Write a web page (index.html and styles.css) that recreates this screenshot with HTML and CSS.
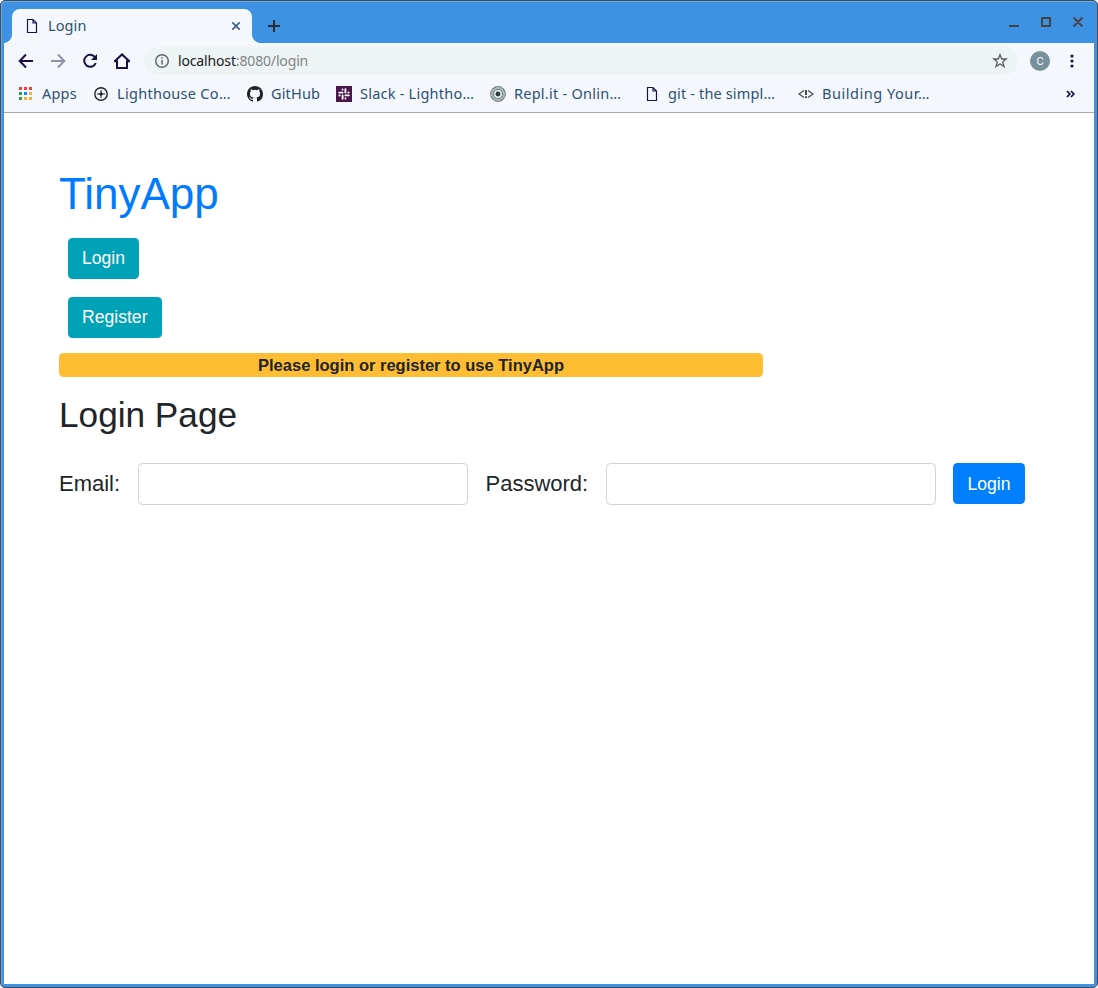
FILE: index.html
```html
<!DOCTYPE html>
<html lang="en">
<head>
<meta charset="utf-8">
<title>Login</title>
<link rel="stylesheet" href="styles.css">
</head>
<body>
<div class="window">
  <header class="titlebar">
    <div class="tab">
      <svg class="tab-file" width="12" height="16" viewBox="0 0 12 16"><path class="file" d="M1.5 1.5H7L10.5 5V14.5H1.5ZM7 1.5V5H10.5"/></svg>
      <span class="tab-title">Login</span>
      <svg class="tab-close" width="10" height="10" viewBox="0 0 10 10"><path d="M1.3 1.3L8.7 8.7M8.7 1.3L1.3 8.7"/></svg>
    </div>
    <svg class="new-tab" width="14" height="14" viewBox="0 0 14 14"><path d="M7 1V13M1 7H13"/></svg>
    <svg class="controls" width="76" height="14" viewBox="0 0 76 14"><path d="M1 11H11M34 3H42V11H34ZM65.5 2.5L74.5 11.5M74.5 2.5L65.5 11.5"/></svg>
  </header>
  <nav class="toolbar">
    <svg class="nav-icon" width="16" height="16" viewBox="0 0 16 16"><path d="M15 8H2M8 1.5L1.7 8L8 14.5"/></svg>
    <svg class="nav-icon faded" width="16" height="16" viewBox="0 0 16 16"><path d="M1 8H14M8 1.5L14.3 8L8 14.5"/></svg>
    <svg class="nav-icon" width="16" height="16" viewBox="0 0 16 16"><path d="M13.2 4.5A6 6 0 1 0 13.8 10"/><path class="solid" d="M15 1V7H9Z"/></svg>
    <svg class="nav-icon" width="16" height="16" viewBox="0 0 16 16"><path d="M.7 8.3H3V15H13V8.3H15.3L8 1.4Z"/></svg>
    <div class="address">
      <svg width="16" height="16" viewBox="0 0 16 16"><circle class="info" cx="8" cy="8" r="6.3"/><path class="info" d="M8 7V11.5M8 4.3V5.8"/></svg>
      <span class="url"><b>localhost</b>:8080/login</span>
      <svg class="star" width="16" height="16" viewBox="0 0 16 16"><path d="M8 1.8L9.7 6H14.2L10.7 8.9L12 13.6L8 11L4 13.6L5.3 8.9L1.8 6H6.3Z"/></svg>
    </div>
    <span class="avatar">C</span>
    <svg class="menu" width="4" height="14" viewBox="0 0 4 14"><circle cx="2" cy="2" r="1.6"/><circle cx="2" cy="7" r="1.6"/><circle cx="2" cy="12" r="1.6"/></svg>
  </nav>
  <nav class="bookmarks">
    <span class="mark apps"><svg width="16" height="16" viewBox="0 0 16 16"><path fill="#fb3b3f" d="M1 1h3v3H1zM6 1h3v3H6zM11 1h3v3h-3z"/><path fill="#2ca05a" d="M1 6h3v3H1zM1 11h3v3H1z"/><path fill="#1a83ee" d="M6 6h3v3H6z"/><path fill="#fbae35" d="M11 6h3v3h-3zM6 11h3v3H6zM11 11h3v3h-3z"/></svg><span>Apps</span></span>
    <span class="mark lighthouse"><svg width="16" height="16" viewBox="0 0 16 16"><g fill="none" stroke="#202326"><circle cx="8" cy="8" r="6.2" stroke-width="1.4"/><path d="M8 4V12M4 8H12"/></g><path fill="#202326" d="M8 5.8L9 7L10.2 8L9 9L8 10.2L7 9L5.8 8L7 7Z"/></svg><span>Lighthouse Co…</span></span>
    <span class="mark github"><svg width="16" height="16" viewBox="0 0 16 16"><path fill="#202326" d="M8 0C3.58 0 0 3.58 0 8c0 3.54 2.29 6.53 5.47 7.59.4.07.55-.17.55-.38 0-.19-.01-.82-.01-1.49-2.01.37-2.53-.49-2.69-.94-.09-.23-.48-.94-.82-1.13-.28-.15-.68-.52-.01-.53.63-.01 1.08.58 1.23.82.72 1.21 1.87.87 2.33.66.07-.52.28-.87.51-1.07-1.78-.2-3.64-.89-3.64-3.95 0-.87.31-1.59.82-2.15-.08-.2-.36-1.02.08-2.12 0 0 .67-.21 2.2.82a7.65 7.65 0 0 1 4 0c1.53-1.04 2.2-.82 2.2-.82.44 1.1.16 1.92.08 2.12.51.56.82 1.27.82 2.15 0 3.07-1.87 3.75-3.65 3.95.29.25.54.73.54 1.48 0 1.07-.01 1.93-.01 2.2 0 .21.15.46.55.38A8.01 8.01 0 0 0 16 8c0-4.42-3.58-8-8-8Z"/></svg><span>GitHub</span></span>
    <span class="mark slack"><svg width="16" height="16" viewBox="0 0 16 16"><path fill="#4a154b" d="M0 0h16v16H0z"/><path fill="none" stroke="#fff" stroke-width="1.9" stroke-linecap="round" d="M3.2 6.6H6.6M9.4 3.2V6.6M12.8 9.4H9.4M6.6 12.8V9.4M6.5 3.4V3.5M12.6 6.5H12.5M9.5 12.6V12.5M3.4 9.5H3.5"/><path fill="none" stroke="#fff" stroke-width="1" d="M6.6 3.5V4.3M12.4 6.6H11.7M9.4 12.4V11.7M3.5 9.4H4.3"/></svg><span>Slack - Lightho…</span></span>
    <span class="mark replit"><svg width="16" height="16" viewBox="0 0 16 16"><circle cx="8" cy="8" r="7.9" fill="#64747a"/><path fill="none" stroke="#c5d0d5" stroke-width=".9" d="M1 5.5Q5 .5 10.7 3.4M5.5 1Q11.7 1 12.5 6.3M10.5 1Q15.2 5 12.6 10.4M15 5.5Q15 11.5 9.7 12.6M15 10.5Q11 15.2 5.5 12.6M10.5 15Q4.3 15 3.4 9.7M5.5 15Q.8 11 3.4 5.5M1 10.5Q1 4.5 6.3 3.4"/><circle cx="8" cy="8" r="3.2" fill="#303b41" stroke="#e8edef" stroke-width="1.5"/></svg><span>Repl.it - Onlin…</span></span>
    <span class="mark git"><svg width="16" height="16" viewBox="0 0 16 16"><path class="file" d="M3.5 1.5H9L12.5 5V14.5H3.5ZM9 1.5V5H12.5"/></svg><span>git - the simpl…</span></span>
    <span class="mark building"><svg width="16" height="16" viewBox="0 0 16 16"><path fill="none" stroke="#45484a" stroke-width="1.2" d="M6 4.5L1 8L6 11.5M10 4.5L15 8L10 11.5"/><path stroke="#292b2d" stroke-width="1.7" d="M8 4V9M8 10.2V12"/></svg><span>Building Your…</span></span>
    <svg class="overflow" width="9" height="8" viewBox="0 0 9 8"><path d="M1 1L3.8 4L1 7M5 1L7.8 4L5 7"/></svg>
  </nav>
  <main class="page">
    <h1>TinyApp</h1>
    <div class="actions">
      <button class="btn teal">Login</button>
      <button class="btn teal">Register</button>
    </div>
    <div class="notice"><span>Please login or register to use TinyApp</span></div>
    <h2>Login Page</h2>
    <form class="login-form">
      <label class="email-label" for="email">Email:</label>
      <input id="email" type="email">
      <label class="password-label" for="password">Password:</label>
      <input id="password" type="password">
      <button class="btn primary" type="button">Login</button>
    </form>
  </main>
</div>
</body>
</html>
```
FILE: styles.css
```css
* { box-sizing: border-box; }
body { margin: 0; background: #fff; font-family: "Liberation Sans", Arial, sans-serif; color: #212529; }
svg { display: block; flex: none; }
.window { width: 1098px; height: 988px; display: flex; flex-direction: column; overflow: hidden; background: #3e92e3; border: 1px solid #484c51; border-radius: 5px; padding: 0 3px 3px; box-shadow: inset 1px 1px #63aaf0; }
.titlebar { height: 42px; flex: none; display: flex; padding: 8px 8px 0; }
.tab { position: relative; width: 240px; height: 34px; display: flex; align-items: center; background: #f4f8fd; border-radius: 8px 8px 0 0; padding: 0 11px 0 14px; }
.tab::before, .tab::after { content: ""; position: absolute; bottom: 0; width: 8px; height: 8px; }
.tab::before { left: -8px; background: radial-gradient(circle at 0 0, transparent 7.5px, #f4f8fd 8px); }
.tab::after { right: -8px; background: radial-gradient(circle at 100% 0, transparent 7.5px, #f4f8fd 8px); }
.file { fill: none; stroke: #1b1145; stroke-width: 1.2; }
.tab-title { font: 14.5px/20px "Noto Sans", sans-serif; letter-spacing: .1px; color: #2c5075; margin-left: 10px; padding-bottom: 2px; }
.tab-close { margin-left: auto; }
.tab-close path { stroke: #3d5f83; stroke-width: 1.7; }
.new-tab { margin: 10px 0 0 15px; }
.new-tab path { stroke: #292d31; stroke-width: 2; }
.controls { margin: 6px 2px 0 auto; }
.controls path { fill: none; stroke: #454545; stroke-width: 2; }
.toolbar { height: 36px; flex: none; display: flex; align-items: center; gap: 16px; background: #f4f8fd; padding: 0 20px 0 14px; }
.nav-icon path { fill: none; stroke: #1b1145; stroke-width: 2; }
.nav-icon .solid { fill: #1b1145; stroke: none; }
.faded { opacity: .45; }
.address { display: flex; align-items: center; width: 874px; height: 28px; margin-left: -2px; background: #eef3f4; border-radius: 14px; padding: 0 10px; }
.info { fill: none; stroke: #626669; stroke-width: 1.5; }
.url { margin-left: 8px; font: 14px/20px "Noto Sans", sans-serif; letter-spacing: -.15px; color: #80868b; }
.url b { font-weight: 400; color: #202124; }
.star { margin-left: auto; }
.star path { fill: none; stroke: #5b5f63; stroke-width: 1.3; }
.avatar { width: 20px; height: 20px; margin-left: -4px; border-radius: 50%; background: #78909c; color: #fff; font: 11px/21px Roboto, sans-serif; text-align: center; flex: none; }
.menu { margin-left: auto; fill: #1b1145; }
.bookmarks { height: 34px; flex: none; display: flex; background: #f4f8fd; border-bottom: 1px solid #a6a8ab; padding: 7px 19px 0 14px; }
.mark { display: flex; height: 16px; align-items: center; gap: 8px; font: 14.5px/16px "Noto Sans", sans-serif; color: #2c5075; white-space: nowrap; flex: none; }
.mark span { padding-bottom: 2px; }
.apps { width: 75px; letter-spacing: .2px; }
.lighthouse { width: 154px; letter-spacing: .3px; }
.github { width: 89px; letter-spacing: .15px; }
.slack { width: 154px; letter-spacing: .23px; }
.replit { width: 154px; letter-spacing: .25px; }
.git { width: 154px; letter-spacing: .15px; }
.building { width: 140px; letter-spacing: .53px; }
.overflow { margin: 4px 0 0 auto; }
.overflow path { fill: none; stroke: #1b1145; stroke-width: 1.8; }
.page { flex: 1; background: #fff; padding: 55px; }
h1, h2 { margin: 0; font-weight: 400; }
h1 { color: #007bff; font-size: 44px; line-height: 52px; }
.actions { display: flex; flex-direction: column; align-items: flex-start; gap: 18px; padding: 18px 0 0 9px; }
.btn { height: 41px; border: 0; border-radius: 4.4px; padding: 0 14px; font: 17.6px/40px "Liberation Sans", sans-serif; color: #fff; }
.teal { background: #00a2b8; padding-bottom: 2px; }
.primary { background: #007fff; width: 72px; }
.notice { width: 704px; height: 24px; margin-top: 15px; border-radius: 4.4px; background: #ffbd33; text-align: center; font: bold 16.5px/25px "Liberation Sans", sans-serif; }
h2 { font-size: 35.2px; line-height: 42px; margin-top: 17px; }
.login-form { display: flex; margin-top: 27px; font-size: 22px; line-height: 41px; }
.email-label { width: 79px; }
.password-label { width: 120px; }
.login-form input { width: 330px; height: 42px; border: 1px solid #ced4da; border-radius: 4.4px; background: #fff; margin-right: 17.5px; }
```
